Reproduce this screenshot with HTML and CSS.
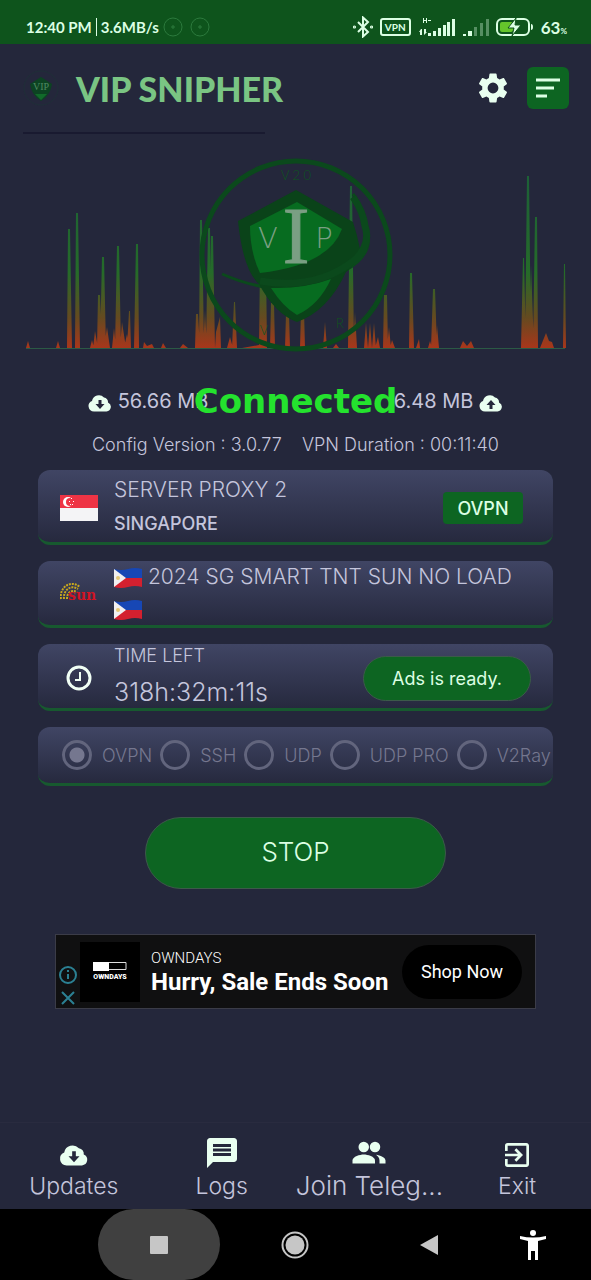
FILE: index.html
```
<!DOCTYPE html>
<html lang="en">
<head>
    <meta charset="UTF-8">
    <meta name="viewport" content="width=device-width, initial-scale=1.0">
    <title>VIP Snipher</title>
    <link rel="stylesheet" href="styles.css">
</head>
<body>

    <!-- Shared shapes -->
    <svg class="defs" width="0" height="0">
        <symbol id="cloud-down" viewBox="0 0 24 18">
            <path fill="#e9fff0" d="M6 17.500a5.500 5.500 0 0 1-2-10.600A7 7 0 0 1 16 3.500a4.500 4.500 0 0 1 4 5 4.700 4.700 0 0 1-1.500 9z"/>
            <path fill="#24273b" d="M10.500 6h3v4h3L12 15 7.500 10h3z"/>
        </symbol>
        <symbol id="cloud-up" viewBox="0 0 24 18">
            <path fill="#e9fff0" d="M6 17.500a5.500 5.500 0 0 1-2-10.600A7 7 0 0 1 16 3.500a4.500 4.500 0 0 1 4 5 4.700 4.700 0 0 1-1.500 9z"/>
            <path fill="#24273b" d="M10.500 15h3v-4h3L12 6l-4.500 5h3z"/>
        </symbol>
        <symbol id="flag-ph" viewBox="0 0 28 20">
            <path fill="#1747b5" d="M0 1q7 2 14 0t14 0v9H0z"/>
            <path fill="#d3202f" d="M0 10h28v9q-7-2-14 0t-14 0z"/>
            <path fill="#f1eff0" d="M0 1l12 9-12 9z"/>
            <circle cx="4" cy="10" r="2" fill="#e5c876"/>
        </symbol>
    </svg>

    <!-- Phone status bar -->
    <div class="statusbar">
        <span>12:40 PM</span>
        <span class="divider"></span>
        <span>3.6MB/s</span>
        <svg class="dots" width="48" height="20" viewBox="0 0 48 20" fill="none" stroke="#2c7a3d">
            <circle cx="10" cy="10" r="9"/>
            <circle cx="37" cy="10" r="9"/>
            <path d="M10 8v4M8 10h4M37 8v4M35 10h4"/>
        </svg>
        <div class="status-icons">
            <svg width="20" height="22" viewBox="0 0 20 22" fill="none" stroke="#dcffe4" stroke-width="2">
                <path d="M5 6l10 10-5 4.500v-19L15 6 5 16"/>
                <circle cx="1.500" cy="11" r=".6"/>
                <circle cx="18.500" cy="11" r=".6"/>
            </svg>
            <span class="vpn">VPN</span>
            <svg width="37" height="20" viewBox="0 0 37 20" fill="#dcffe4">
                <path d="M10 16h3v3h-3zM15 14h3v5h-3zM20 11h3v8h-3zM25 8h3v11h-3zM29 5h3v14h-3zM34 2h3v17h-3zM5 1h1v2h2V1h1v5H8V4H6v2H5zM10 3h3v1h-3zM3 12l-2 3h1v3h2v-6zM6 12v6l3-3H8v-3z"/>
            </svg>
            <svg width="27" height="20" viewBox="0 0 27 20" fill="#dcffe4">
                <path d="M1 17h3v2H1zM6 14h4v5H6z"/>
                <path opacity=".35" d="M12 10h3v9h-3zM18 6h3v13h-3zM24 2h3v17h-3z"/>
            </svg>
            <svg width="38" height="18" viewBox="0 0 38 18">
                <rect x="1" y="1" width="32" height="16" rx="5" fill="none" stroke="#dcffe4" stroke-width="2"/>
                <path d="M35 6q2 0 2 3t-2 3z" fill="#dcffe4"/>
                <rect x="4" y="4" width="13" height="10" rx="2" fill="#65c52b"/>
                <path d="M20 0l-8 10h6l-2 8 9-11h-6z" fill="#dcffe4" stroke="#0e541c"/>
            </svg>
            <span>63<small>%</small></span>
        </div>
    </div>

    <!-- Header -->
    <header class="header">
        <svg class="logo" width="38" height="38" viewBox="0 0 38 38">
            <circle cx="19" cy="19" r="17" fill="none" stroke="#1f2f38"/>
            <path fill="#0c4322" d="M19 8l11 7q-2 12-11 17Q10 27 8 15z"/>
            <path fill="#116a2a" d="M13 25h12l-6 6z"/>
            <text x="19" y="21" text-anchor="middle" font-family="Liberation Serif, serif" font-size="10" fill="#4f8a62">VIP</text>
        </svg>
        <h1>VIP SNIPHER</h1>
        <button class="icon-btn" aria-label="Settings">
            <svg width="36" height="36" viewBox="0 0 24 24" fill="#e9fff0">
                <path d="M19.140 12.940c.04-.3.06-.61.06-.94 0-.32-.02-.64-.07-.94l2.030-1.580c.18-.14.23-.41.12-.61l-1.920-3.320c-.12-.22-.37-.29-.59-.22l-2.390.96c-.5-.38-1.030-.7-1.620-.94l-.36-2.540c-.04-.24-.24-.41-.48-.41h-3.840c-.24 0-.43.17-.47.41l-.36 2.540c-.59.24-1.130.57-1.620.94l-2.390-.96c-.22-.08-.47 0-.59.22L2.740 8.870c-.12.21-.08.47.12.61l2.030 1.580c-.05.3-.09.63-.09.94s.02.64.07.94l-2.030 1.580c-.18.14-.23.41-.12.61l1.920 3.320c.12.22.37.29.59.22l2.390-.96c.5.38 1.030.7 1.620.94l.36 2.540c.05.24.24.41.48.41h3.840c.24 0 .44-.17.47-.41l.36-2.540c.59-.24 1.130-.56 1.620-.94l2.390.96c.22.08.47 0 .59-.22l1.920-3.320c.12-.22.07-.47-.12-.61zM12 15.600A3.600 3.600 0 1 1 12 8.400a3.600 3.600 0 0 1 0 7.200z"/>
            </svg>
        </button>
        <button class="icon-btn menu-btn" aria-label="Menu">
            <svg width="26" height="20" viewBox="0 0 26 20" stroke="#dcffe4" stroke-width="3">
                <path d="M1 2h24M1 10h18M1 18h11"/>
            </svg>
        </button>
    </header>
    <hr class="rule">

    <!-- Traffic graph with the shield logo -->
    <svg class="graph" viewBox="26 150 540 203">
        <defs>
            <linearGradient id="traffic" gradientUnits="userSpaceOnUse" x1="0" y1="180" x2="0" y2="348">
                <stop offset="0" stop-color="#1d6137"/>
                <stop offset=".55" stop-color="#256b29"/>
                <stop offset=".82" stop-color="#654a20"/>
                <stop offset="1" stop-color="#a8361b"/>
            </linearGradient>
        </defs>
        <path d="M26 348.500h539" stroke="#2b5a45"/>
        <path fill="url(#traffic)" d="M26 348l2-7 2 7zM56 348l2-7 2 7zM67 348l1-119h2l2 119zM75 348l1-135h2l2 135zM90 348l2-8 2 8zM93 348l2-17 3 17zM97 348l1-53h2l2 53zM100 348l2-91h2l2 91zM104 348l3-21 3 21zM112 348l2-20 2 20zM115 348l2-102h2l2 102zM120 348l2-26 4 26zM124 348l3-14 2 14zM127 348l2-37h1l1 37zM134 348l2-104h2l1 104zM143 348l1-6 3 4 5-2 2 4zM161 348l2-5 3 5zM180 348l3-4 5 4zM195 348l1-34h2l2 34zM199 348l1-128h2l2 128zM203 348l2-38 2 38zM206 348l2-120h2l2 120zM210 348l1-112h2l2 112zM215 348l1-16 4-15 1 31zM227 348l3-11 3 11zM232 348l2-46h1l2 46zM242 348l17-3 1-81h6l1 84zM270 348l1-45h3l1 45zM285 348l1-34h3l1 34zM300 348l1-38h3l1 38zM323 348l2-26 2 26zM333 348l3-4 3 4zM348 348l2-162h2l2 162zM353 348l2-36 2 36zM364 348l2-25 2 25zM368 348l2-25 2 25zM372 348l2-25 2 25zM375 348l3-11 2 11zM383 348l1-53h3l1 53zM387 348l2-21 2 21zM390 348l2-8 3 8zM409 348l1-75h2l2 75zM416 348l3-9 1 9zM428 348l2-7 2 7zM431 348l2-59h2l2 59zM436 348l1-23 2 23zM460 348l3-7 4 5 4-5 3 7zM521 348l2-90h1l2 90zM525 348l2-172h2l2 172zM529 348l2-83 3 83zM533 348l2-131h2l1 131zM540 348l4-10 2-5 3 8 3 1 2 6zM563 348l1-84h1l1 84z"/>
        <g fill="none" stroke="#0b491c">
            <circle cx="296" cy="255" r="94" stroke-width="5"/>
            <path stroke-width="3" d="M222 274q50 22 90 10 61-18 56-49-2-23-15-41"/>
        </g>
        <path fill="#0a4319" d="M296 190l57 32q4 12 7 27-5 15-14 23-18 39-49 50-22-8-38-38-16-14-21-63z"/>
        <path fill="#076c20" d="M297 202l45 27q-13 36-82 44-10-21-10-47z"/>
        <path fill="#076c20" d="M271 288q32 1 60-9-12 26-34 36-14-8-26-27z"/>
        <path fill="none" stroke="#0b491c" stroke-width="7" d="M260 281q57 10 96-22 15-16 9-33-2-15-12-29"/>
        <g fill="#7a9f83" text-anchor="middle">
            <text class="logo-side" x="268" y="248">V</text>
            <text class="logo-mid" x="296" y="263">I</text>
            <text class="logo-side" x="324" y="248">P</text>
        </g>
        <g fill="#0d5520" text-anchor="middle" font-size="13" font-family="Lato, sans-serif">
            <text x="296" y="180">V 2 0</text>
            <text x="264" y="335">V</text>
            <text x="340" y="328">R</text>
        </g>
    </svg>

    <!-- Connection info -->
    <div class="traffic">
        <span><svg width="24" height="18"><use href="#cloud-down"/></svg> 56.66 MB</span>
        <strong>Connected</strong>
        <span>6.48 MB <svg width="24" height="18"><use href="#cloud-up"/></svg></span>
    </div>
    <div class="info">
        <span>Config Version : 3.0.77</span>
        <span>VPN Duration : 00:11:40</span>
    </div>

    <main>
        <section class="card server">
            <svg class="card-icon" width="38" height="26" viewBox="0 0 38 26">
                <path fill="#f4f4f6" d="M0 0h38v26H0z"/>
                <path fill="#ee3445" d="M0 0h38v13H0z"/>
                <circle cx="8" cy="7" r="5" fill="#fff"/>
                <circle cx="10" cy="7" r="4" fill="#ee3445"/>
                <path fill="#fff" d="M11 3h1v1h-1zM9 6h1v1H9zM13 6h1v1h-1zM10 9h1v1h-1zM12 9h1v1h-1z"/>
            </svg>
            <div class="card-text">
                <div class="title">SERVER PROXY 2</div>
                <div class="subtitle">SINGAPORE</div>
            </div>
            <button class="tag">OVPN</button>
        </section>

        <section class="card network">
            <svg class="card-icon" width="38" height="22" viewBox="0 0 38 22">
                <g fill="none" stroke="#c9a81c" stroke-width="2" stroke-dasharray="2 1">
                    <path d="M1 17C-1 6 10-3 20 5"/>
                    <path d="M4 17C3 9 10 2 18 7"/>
                    <path d="M7 17C7 11 11 7 17 10"/>
                </g>
                <text class="sun" x="8" y="18">sun</text>
            </svg>
            <div class="title">
                <svg width="28" height="20"><use href="#flag-ph"/></svg>
                2024 SG SMART TNT SUN NO LOAD
                <svg width="28" height="20"><use href="#flag-ph"/></svg>
            </div>
        </section>

        <section class="card time">
            <svg class="card-icon" width="38" height="26" viewBox="0 0 38 26" fill="none" stroke="#f1fff5">
                <circle cx="19" cy="13" r="11" stroke-width="3"/>
                <path d="M20 7v8h-5" stroke-width="2"/>
            </svg>
            <div class="card-text">
                <div class="label">TIME LEFT</div>
                <div class="clock">318h:32m:11s</div>
            </div>
            <button class="pill">Ads is ready.</button>
        </section>

        <section class="card modes">
            <label><input type="radio" name="mode" checked> OVPN</label>
            <label><input type="radio" name="mode"> SSH</label>
            <label><input type="radio" name="mode"> UDP</label>
            <label><input type="radio" name="mode"> UDP PRO</label>
            <label><input type="radio" name="mode"> V2Ray</label>
        </section>
    </main>

    <button class="pill stop">STOP</button>

    <!-- Ad banner -->
    <aside class="ad">
        <svg class="ad-marks" width="20" height="44" viewBox="0 0 20 44" fill="none" stroke="#2b8093" stroke-width="2">
            <circle cx="10" cy="11" r="8"/>
            <path d="M10 10v5M10 6v2M4 28l12 12M16 28L4 40"/>
        </svg>
        <div class="brand">
            <svg width="34" height="9" viewBox="0 0 34 9">
                <path fill="#fff" d="M0 0h16v9H0z"/>
                <path fill="none" stroke="#ddd" d="M16 .500h17v7H16"/>
            </svg>
            <small>OWNDAYS</small>
        </div>
        <div class="ad-text">
            <div>OWNDAYS</div>
            <b>Hurry, Sale Ends Soon</b>
        </div>
        <button class="shop">Shop Now</button>
    </aside>

    <!-- Bottom navigation -->
    <nav class="tabs">
        <a href="#">
            <svg class="cloud" width="30" height="22"><use href="#cloud-down"/></svg>
            <span>Updates</span>
        </a>
        <a href="#">
            <svg width="36" height="36" viewBox="0 0 24 24" fill="#e9fff0"><path d="M20 2H4c-1.100 0-1.990.9-1.990 2L2 22l4-4h14c1.100 0 2-.9 2-2V4c0-1.100-.9-2-2-2zM6 9h12v2H6zm12 5H6v-2h12zm0-6H6V6h12z"/></svg>
            <span>Logs</span>
        </a>
        <a href="#" class="active">
            <svg width="36" height="36" viewBox="0 0 24 24" fill="#e9fff0"><path d="M16.670 13.130C18.040 14.060 19 15.320 19 17v2h4v-2c0-2.180-3.570-3.470-6.330-3.870z"/><circle cx="8.500" cy="8" r="3.500"/><circle cx="16" cy="8" r="3.500"/><path d="M8.500 13C6 13 1 14.340 1 17v2h15v-2c0-2.660-5-4-7.500-4z"/></svg>
            <span>Join Teleg...</span>
        </a>
        <a href="#">
            <svg width="32" height="32" viewBox="0 0 24 24" fill="#e9fff0"><path d="M10.090 15.590L11.500 17l5-5-5-5-1.410 1.410L12.670 11H3v2h9.670zM19 3H5a2 2 0 0 0-2 2v4h2V5h14v14H5v-4H3v4a2 2 0 0 0 2 2h14c1.100 0 2-.9 2-2V5c0-1.100-.9-2-2-2z"/></svg>
            <span>Exit</span>
        </a>
    </nav>

    <!-- Android buttons -->
    <div class="system">
        <button class="pressed" aria-label="Recent apps">
            <svg width="18" height="18"><rect width="18" height="18" rx="1" fill="#c6c6c6"/></svg>
        </button>
        <button aria-label="Home">
            <svg width="28" height="28" viewBox="0 0 28 28"><circle cx="14" cy="14" r="12.500" fill="none" stroke="#c6c6c6" stroke-width="2"/><circle cx="14" cy="14" r="9.500" fill="#c6c6c6"/></svg>
        </button>
        <button aria-label="Back">
            <svg width="18" height="20"><path fill="#c6c6c6" d="M18 0v20L0 10z"/></svg>
        </button>
        <button aria-label="Accessibility">
            <svg width="28" height="32" viewBox="0 0 28 32" fill="#fff"><circle cx="14" cy="4" r="3"/><path d="M1 7q13 3 26 0v3l-8 2v19h-3v-9h-4v9H9V12l-8-2z"/></svg>
        </button>
    </div>

</body>
</html>
```
FILE: styles.css
```
/* Body and General Styling */
* {
    box-sizing: border-box;
}

body {
    display: flex;
    flex-direction: column;
    min-height: 100vh;
    margin: 0;
    background-color: #24273b;
    color: #c4c5dc;
    font-family: Inter, "Open Sans", sans-serif;
    font-weight: 300;
    font-size: 18px;
}

svg {
    flex: none;
}

.defs {
    position: absolute;
}

button {
    border: none;
    padding: 0;
    font: inherit;
    color: #dcffe4;
    cursor: pointer;
}

/* Status bar */
.statusbar {
    display: flex;
    align-items: center;
    height: 44px;
    padding: 10px 24px 0 26px;
    background-color: #0e541c;
    color: #dcffe4;
    font-family: Lato, sans-serif;
    font-weight: 700;
    font-size: 15px;
}

.divider {
    width: 1px;
    height: 18px;
    margin: 0 4px;
    background-color: #dcffe4;
}

.dots {
    margin-left: 4px;
}

.status-icons {
    display: flex;
    align-items: center;
    gap: 7px;
    margin-left: auto;
    font-size: 17px;
}

.status-icons small {
    font-size: 8px;
}

.vpn {
    padding: 0 3px;
    border: 2px solid #dcffe4;
    border-radius: 3px;
    font-size: 10px;
    line-height: 14px;
}

/* Header */
.header {
    display: flex;
    align-items: center;
    height: 88px;
    padding: 0 22px;
}

.header h1 {
    margin: 0 auto 0 16px;
    color: #7ac583;
    font-family: Lato, sans-serif;
    font-weight: 900;
    font-size: 34px;
}

.icon-btn {
    display: flex;
    align-items: center;
    justify-content: center;
    width: 42px;
    height: 42px;
    background: none;
}

.menu-btn {
    margin-left: 13px;
    border-radius: 6px;
    background-color: #0d6522;
}

.rule {
    width: 41%;
    height: 2px;
    margin: 0 0 0 23px;
    border: none;
    background-color: #191a30;
}

/* Graph */
.graph {
    margin: 16px 25px 0 26px;
}

.logo-side {
    font-family: "DejaVu Sans", sans-serif;
    font-weight: 200;
    font-size: 29px;
}

.logo-mid {
    font-family: "Liberation Serif", serif;
    font-weight: 400;
    font-size: 80px;
    stroke: #7a9f83;
    stroke-width: 1px;
}

/* Connection info */
.traffic {
    position: relative;
    display: flex;
    justify-content: space-between;
    margin: 32px 88px 0;
    font-size: 20px;
    font-weight: 400;
    line-height: 32px;
}

.traffic svg {
    vertical-align: -4px;
}

.traffic strong {
    position: absolute;
    left: 0;
    right: 0;
    text-align: center;
    color: #24e22e;
    font-family: "DejaVu Sans", sans-serif;
    font-size: 34px;
}

.info {
    display: flex;
    justify-content: center;
    gap: 20px;
    margin: 16px 0 13px;
    line-height: 24px;
}

/* Cards */
main {
    display: grid;
    gap: 16px;
    margin: 0 38px;
}

.card {
    display: flex;
    align-items: center;
    min-height: 67px;
    padding: 0 22px;
    border-bottom: 3px solid #17592f;
    border-radius: 12px;
    background-image: linear-gradient(#404564, #26293e);
    overflow: hidden;
}

.card-icon {
    margin-right: 16px;
}

.title {
    font-size: 21px;
    line-height: 32px;
}

.title svg {
    vertical-align: -4px;
}

.server {
    min-height: 75px;
    padding-top: 4px;
    padding-right: 30px;
}

.subtitle {
    font-weight: 500;
    line-height: 36px;
}

.tag {
    width: 80px;
    height: 32px;
    margin-left: auto;
    border-radius: 4px;
    background-color: #0d6522;
    font-weight: 500;
}

.time {
    height: 67px;
    padding-top: 4px;
}

.label {
    line-height: 28px;
}

.clock {
    font-size: 25px;
    line-height: 44px;
}

.pill {
    width: 168px;
    height: 45px;
    margin-left: auto;
    border: 1px solid #3c5a4a;
    border-radius: 36px;
    background-color: #0d6522;
    font-weight: 400;
}

.modes {
    min-height: 59px;
    gap: 8px;
    padding: 0 0 0 24px;
    color: #75778f;
    white-space: nowrap;
}

.modes label {
    display: flex;
    align-items: center;
    gap: 10px;
}

.modes input {
    appearance: none;
    width: 30px;
    height: 30px;
    margin: 0;
    border: 3px solid #62657d;
    border-radius: 50%;
}

.modes input:checked {
    background-image: radial-gradient(#75778f 7px, transparent 8px);
}

.sun {
    fill: #cf1424;
    font-family: "DejaVu Serif", serif;
    font-weight: 700;
    font-size: 14px;
}

.stop {
    width: 301px;
    height: 72px;
    margin: 31px auto 45px;
    padding-bottom: 4px;
    font-size: 26px;
    font-weight: 300;
}

/* Ad */
.ad {
    display: flex;
    align-items: center;
    height: 75px;
    margin: 0 55px 24px;
    padding-right: 13px;
    border: 1px solid #3b3c48;
    background-color: #101011;
    color: #fff;
    font-family: Roboto, sans-serif;
}

.ad-marks {
    align-self: flex-end;
    margin: 0 2px;
}

.brand {
    display: flex;
    flex-direction: column;
    align-items: center;
    justify-content: center;
    gap: 2px;
    width: 60px;
    height: 60px;
    background-color: #000;
    font-weight: 900;
}

.brand small {
    font-size: 7px;
}

.ad-text {
    margin-left: 11px;
    font-size: 15px;
    line-height: 22px;
}

.ad-text b {
    font-size: 24px;
    font-weight: 700;
    line-height: 26px;
}

.shop {
    width: 120px;
    height: 54px;
    margin-left: auto;
    border-radius: 27px;
    background-color: #000;
    color: #fff;
    font-weight: 400;
}

/* Bottom navigation */
.tabs {
    display: grid;
    grid-template-columns: repeat(4, 1fr);
    height: 87px;
    margin-top: auto;
    border-top: 1px solid #292b3f;
}

.tabs a {
    display: flex;
    flex-direction: column;
    align-items: center;
    justify-content: flex-end;
    padding-bottom: 8px;
    color: inherit;
    text-decoration: none;
    font-size: 23px;
    line-height: 30px;
    white-space: nowrap;
}

.tabs .active {
    font-size: 26px;
}

.cloud {
    margin-bottom: 5px;
}

/* Android buttons */
.system {
    display: grid;
    grid-template-columns: 98fr 122fr 150fr 118fr 90fr 13fr;
    height: 71px;
    background-color: #000;
}

.system button {
    display: flex;
    align-items: center;
    justify-content: center;
    background: none;
}

.system .pressed {
    grid-column: 2;
    border-radius: 36px;
    background-color: #404040;
}
```
